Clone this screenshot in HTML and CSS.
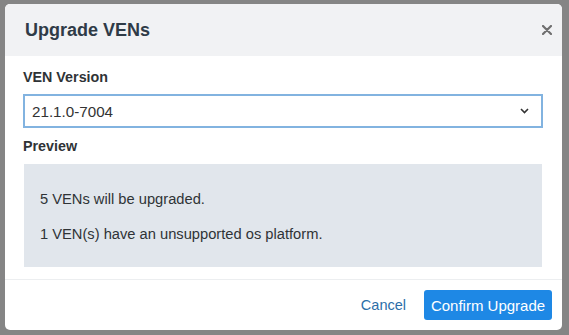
FILE: index.html
```html
<!DOCTYPE html>
<html lang="en">
<head>
<meta charset="utf-8">
<title>Upgrade VENs</title>
<link rel="stylesheet" href="styles.css">
</head>
<body>
<div class="modal">
  <div class="modal-header">
    <h2 class="modal-title">Upgrade VENs</h2>
    <button class="close" aria-label="Close">
      <svg width="10" height="10" viewBox="0 0 10 10"><path d="M1 1 L9 9 M9 1 L1 9" stroke="#6f6f6f" stroke-width="2.2" stroke-linecap="round"/></svg>
    </button>
  </div>
  <div class="modal-body">
    <div class="label">VEN Version</div>
    <div class="select">
      <span>21.1.0-7004</span>
      <svg width="9" height="6" viewBox="0 0 9 6"><path d="M1 1 L4.5 4.5 L8 1" fill="none" stroke="#333" stroke-width="1.6"/></svg>
    </div>
    <div class="label preview-label">Preview</div>
    <div class="preview">
      <p>5 VENs will be upgraded.</p>
      <p>1 VEN(s) have an unsupported os platform.</p>
    </div>
  </div>
  <div class="modal-footer">
    <a class="cancel" href="#">Cancel</a>
    <button class="confirm">Confirm Upgrade</button>
  </div>
</div>
</body>
</html>
```

FILE: styles.css
```css
html, body {
  margin: 0;
  padding: 0;
}
body {
  background: #858585;
  font-family: "Liberation Sans", Arial, sans-serif;
  color: #333;
  width: 569px;
  height: 335px;
  overflow: hidden;
}
.modal {
  margin: 4px 0 0 5px;
  width: 557px;
  height: 326px;
  background: #fff;
  border-radius: 5px;
  overflow: hidden;
  display: flex;
  flex-direction: column;
}
.modal-header {
  height: 52px;
  background: #f1f2f4;
  display: flex;
  align-items: center;
  justify-content: space-between;
  padding: 0 10px 0 20px;
  flex-shrink: 0;
}
.modal-title {
  margin: 0;
  font-size: 18px;
  font-weight: bold;
  color: #2f3b47;
  line-height: 22px;
}
.close {
  border: 0;
  background: none;
  padding: 0;
  width: 10px;
  height: 10px;
  display: flex;
}
.modal-body {
  padding: 11px 19px 12px 18px;
  border-bottom: 1px solid #eceef0;
}
.label {
  font-size: 14.3px;
  font-weight: bold;
  line-height: 20px;
  color: #2f3336;
}
.select {
  margin-top: 7px;
  height: 30px;
  border: 2px solid #82b3e0;
  display: flex;
  align-items: center;
  justify-content: space-between;
  padding: 0 12px 0 7px;
  font-size: 15.2px;
  color: #333;
}
.preview-label {
  margin-top: 8px;
}
.preview {
  margin: 8px 0 0 1px;
  width: 518px;
  box-sizing: border-box;
  background: #e1e6ec;
  padding: 25px 16px 23px;
}
.preview p {
  margin: 0;
  font-size: 14.7px;
  line-height: 20px;
  color: #2f3336;
}
.preview p + p {
  margin-top: 15px;
}
.modal-footer {
  flex: 1;
  display: flex;
  align-items: center;
  justify-content: flex-end;
  padding: 0 10px 0 0;
  gap: 18px;
}
.cancel {
  font-size: 14.5px;
  color: #2c6ea8;
  text-decoration: none;
}
.confirm {
  width: 128px;
  height: 30px;
  border: 0;
  border-radius: 3px;
  background: #1e88e5;
  color: #fff;
  font-family: "Liberation Sans", Arial, sans-serif;
  font-size: 15px;
  padding: 0;
}
```
